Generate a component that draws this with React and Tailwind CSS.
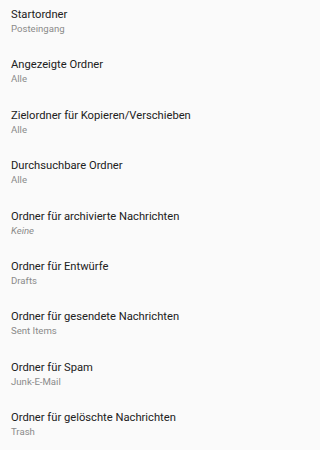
const rows = [
  { title: "Startordner", value: "Posteingang" },
  { title: "Angezeigte Ordner", value: "Alle" },
  { title: "Zielordner für Kopieren/Verschieben", value: "Alle" },
  { title: "Durchsuchbare Ordner", value: "Alle" },
  { title: "Ordner für archivierte Nachrichten", value: "Keine", italic: true },
  { title: "Ordner für Entwürfe", value: "Drafts" },
  { title: "Ordner für gesendete Nachrichten", value: "Sent Items" },
  { title: "Ordner für Spam", value: "Junk-E-Mail" },
  { title: "Ordner für gelöschte Nachrichten", value: "Trash" },
];

export default function App() {
  return (
    <div className="w-full min-h-screen overflow-hidden bg-[#fafafa] font-['Roboto',sans-serif]">
      {rows.map((r) => (
        <div key={r.title} className="h-[50.4px] pl-[11px] pt-[8px] flex flex-col">
          <div className="text-[11.2px] leading-[14px] text-[#212121]">{r.title}</div>
          <div
            className={
              "mt-[1px] text-[9.6px] leading-[12px] text-[#8a8a8a]" +
              (r.italic ? " italic" : "")
            }
          >
            {r.value}
          </div>
        </div>
      ))}
    </div>
  );
}
